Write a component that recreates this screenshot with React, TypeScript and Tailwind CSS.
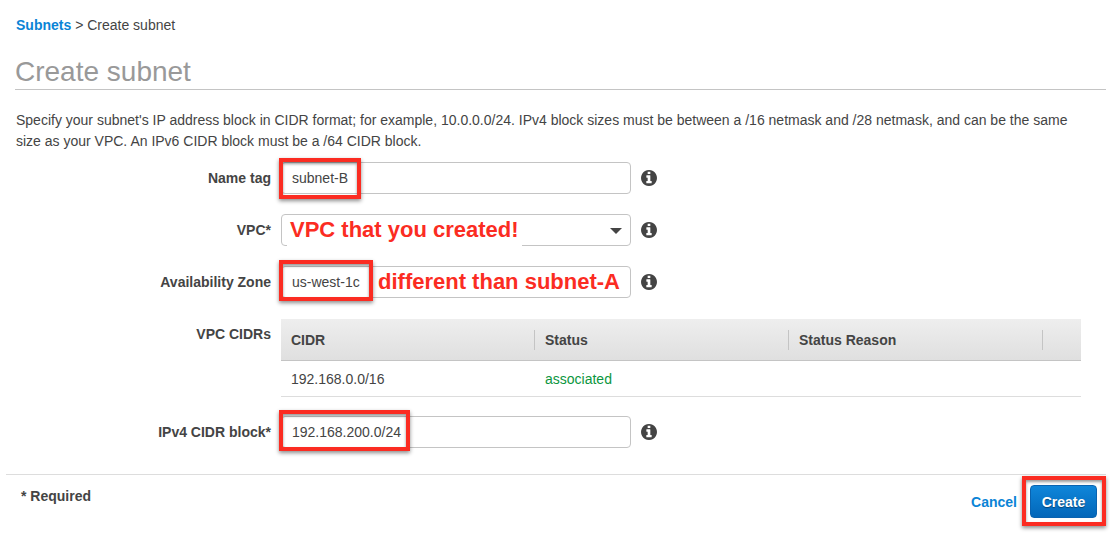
import type { ReactNode } from "react";

const inputClass =
  "block h-8 w-full rounded border border-[#c4c4c4] bg-white px-[10px] text-sm text-[#444] outline-none";

function InfoIcon() {
  return (
    <svg aria-hidden="true" viewBox="0 0 1536 1536" className="size-4" fill="currentColor">
      <path d="M1024 1248v-160q0-14-9-23t-23-9h-96v-512q0-14-9-23t-23-9h-320q-14 0-23 9t-9 23v160q0 14 9 23t23 9h96v320h-96q-14 0-23 9t-9 23v160q0 14 9 23t23 9h448q14 0 23-9t9-23zm-128-896v-160q0-14-9-23t-23-9h-192q-14 0-23 9t-9 23v160q0 14 9 23t23 9h192q14 0 23-9t9-23zm640 416q0 209-103 385.5t-279.5 279.5-385.5 103-385.5-103-279.5-279.5-103-385.5 103-385.5 279.5-279.5 385.5-103 385.5 103 279.5 279.5 103 385.5z" />
    </svg>
  );
}

function Highlight({ className }: { className: string }) {
  return (
    <span
      aria-hidden="true"
      className={`pointer-events-none absolute border-4 border-[#fb2c22] shadow-[0_2px_4px_rgba(0,0,0,0.45),inset_0_2px_3px_rgba(0,0,0,0.4)] ${className}`}
    />
  );
}

function Field({ id, label, children }: { id: string; label: string; children: ReactNode }) {
  return (
    <div className="flex items-center gap-[10px]">
      <label htmlFor={id} className="w-64 shrink-0 text-right font-bold">
        {label}
      </label>
      <div className="relative w-[350px]">{children}</div>
      <button type="button" aria-label={`About ${label}`} className="shrink-0">
        <InfoIcon />
      </button>
    </div>
  );
}

function HeaderCell({ children }: { children: string }) {
  return (
    <th className="border-b border-[#c4c4c4] p-0 text-left font-bold">
      <div className="flex h-5 items-center border-r border-[#c4c4c4] pl-[10px]">{children}</div>
    </th>
  );
}

export default function App() {
  return (
    <main className="bg-white pb-5 pt-[14px] font-['Liberation_Sans',Arial,sans-serif] text-sm text-[#444]">
      <div className="pl-[15px] pr-1">
        <nav aria-label="Breadcrumb" className="h-[22px] pl-px leading-[22px]">
          <a href="#subnets" className="font-bold text-[#0a84d6]">
            Subnets
          </a>{" "}
          &gt; Create subnet
        </nav>
        <h1 className="mt-[18px] border-b border-[#c4c4c4] text-[28px] leading-[35px] text-[#999]">
          Create subnet
        </h1>
        <p className="mt-5 pl-px pr-4 leading-[21px]">
          Specify your subnet's IP address block in CIDR format; for example, 10.0.0.0/24. IPv4 block
          sizes must be between a /16 netmask and /28 netmask, and can be the same size as your VPC.
          An IPv6 CIDR block must be a /64 CIDR block.
        </p>

        <form id="subnet-form" className="mt-[10px] flex flex-col gap-5">
          <Field id="name" label="Name tag">
            <input id="name" className={inputClass} defaultValue="subnet-B" />
            <Highlight className="-left-[2px] -top-1 h-[41px] w-[82px]" />
          </Field>
          <Field id="vpc" label="VPC*">
            <select id="vpc" className={`${inputClass} appearance-none`}>
              <option value=""></option>
            </select>
            <svg
              aria-hidden="true"
              viewBox="0 0 12 6"
              className="pointer-events-none absolute right-[9px] top-[14px] h-[6px] w-3"
            >
              <path d="M0 0h12L6 6z" fill="#444" />
            </svg>
            <span className="pointer-events-none absolute left-[6px] top-[2px] whitespace-nowrap bg-white px-[3px] pb-[2px] text-[22px] font-bold leading-[28px] text-[#fb2c22]">
              VPC that you created!
            </span>
          </Field>
          <Field id="zone" label="Availability Zone">
            <input id="zone" className={inputClass} defaultValue="us-west-1c" />
            <Highlight className="-left-[2px] -top-[6px] h-[41px] w-[94px]" />
            <span className="pointer-events-none absolute left-[97px] top-[2px] whitespace-nowrap text-[22px] font-bold leading-[28px] text-[#fb2c22]">
              different than subnet-A
            </span>
          </Field>

          <div className="-mb-px mt-px flex items-start gap-[10px] pr-[25px]">
            <div id="cidrs-label" className="w-64 shrink-0 pt-[5px] text-right font-bold">
              VPC CIDRs
            </div>
            <div className="min-w-0 flex-1">
              <table
                aria-labelledby="cidrs-label"
                className="w-full table-fixed border-separate border-spacing-0"
              >
                <colgroup>
                  <col />
                  <col />
                  <col />
                  <col className="w-[38px]" />
                </colgroup>
                <thead>
                  <tr className="h-[42px] bg-linear-to-b from-[#eee] to-[#dfdfdf]">
                    <HeaderCell>CIDR</HeaderCell>
                    <HeaderCell>Status</HeaderCell>
                    <HeaderCell>Status Reason</HeaderCell>
                    <td className="border-b border-[#c4c4c4]" />
                  </tr>
                </thead>
                <tbody>
                  <tr className="h-9">
                    <td className="border-b border-[#ddd] pl-[10px]">192.168.0.0/16</td>
                    <td className="border-b border-[#ddd] pl-[10px] text-[#0c9640]">associated</td>
                    <td className="border-b border-[#ddd]" />
                    <td className="border-b border-[#ddd]" />
                  </tr>
                </tbody>
              </table>
            </div>
          </div>

          <Field id="ipv4" label="IPv4 CIDR block*">
            <input id="ipv4" className={inputClass} defaultValue="192.168.200.0/24" />
            <Highlight className="-left-[2px] -top-[6px] h-[41px] w-[131px]" />
          </Field>
        </form>
      </div>

      <footer className="ml-[6px] mr-1 mt-[26px] flex items-start justify-between border-t border-[#ddd] pl-[15px]">
        <strong className="pt-[11px]">* Required</strong>
        <div className="flex items-center gap-[13px] pr-[9px] pt-[10px]">
          <a href="#cancel" className="font-bold text-[#0a84d6]">
            Cancel
          </a>
          <div className="relative">
            <button
              type="submit"
              form="subnet-form"
              className="block h-[33px] w-[67px] rounded border border-[#0a63b0] bg-linear-to-b from-[#0f86da] to-[#0467b9] font-bold text-white [text-shadow:0_1px_1px_rgba(0,0,0,0.4)]"
            >
              Create
            </button>
            <Highlight className="-left-2 -right-[9px] -top-[9px] h-[50px]" />
          </div>
        </div>
      </footer>
    </main>
  );
}
